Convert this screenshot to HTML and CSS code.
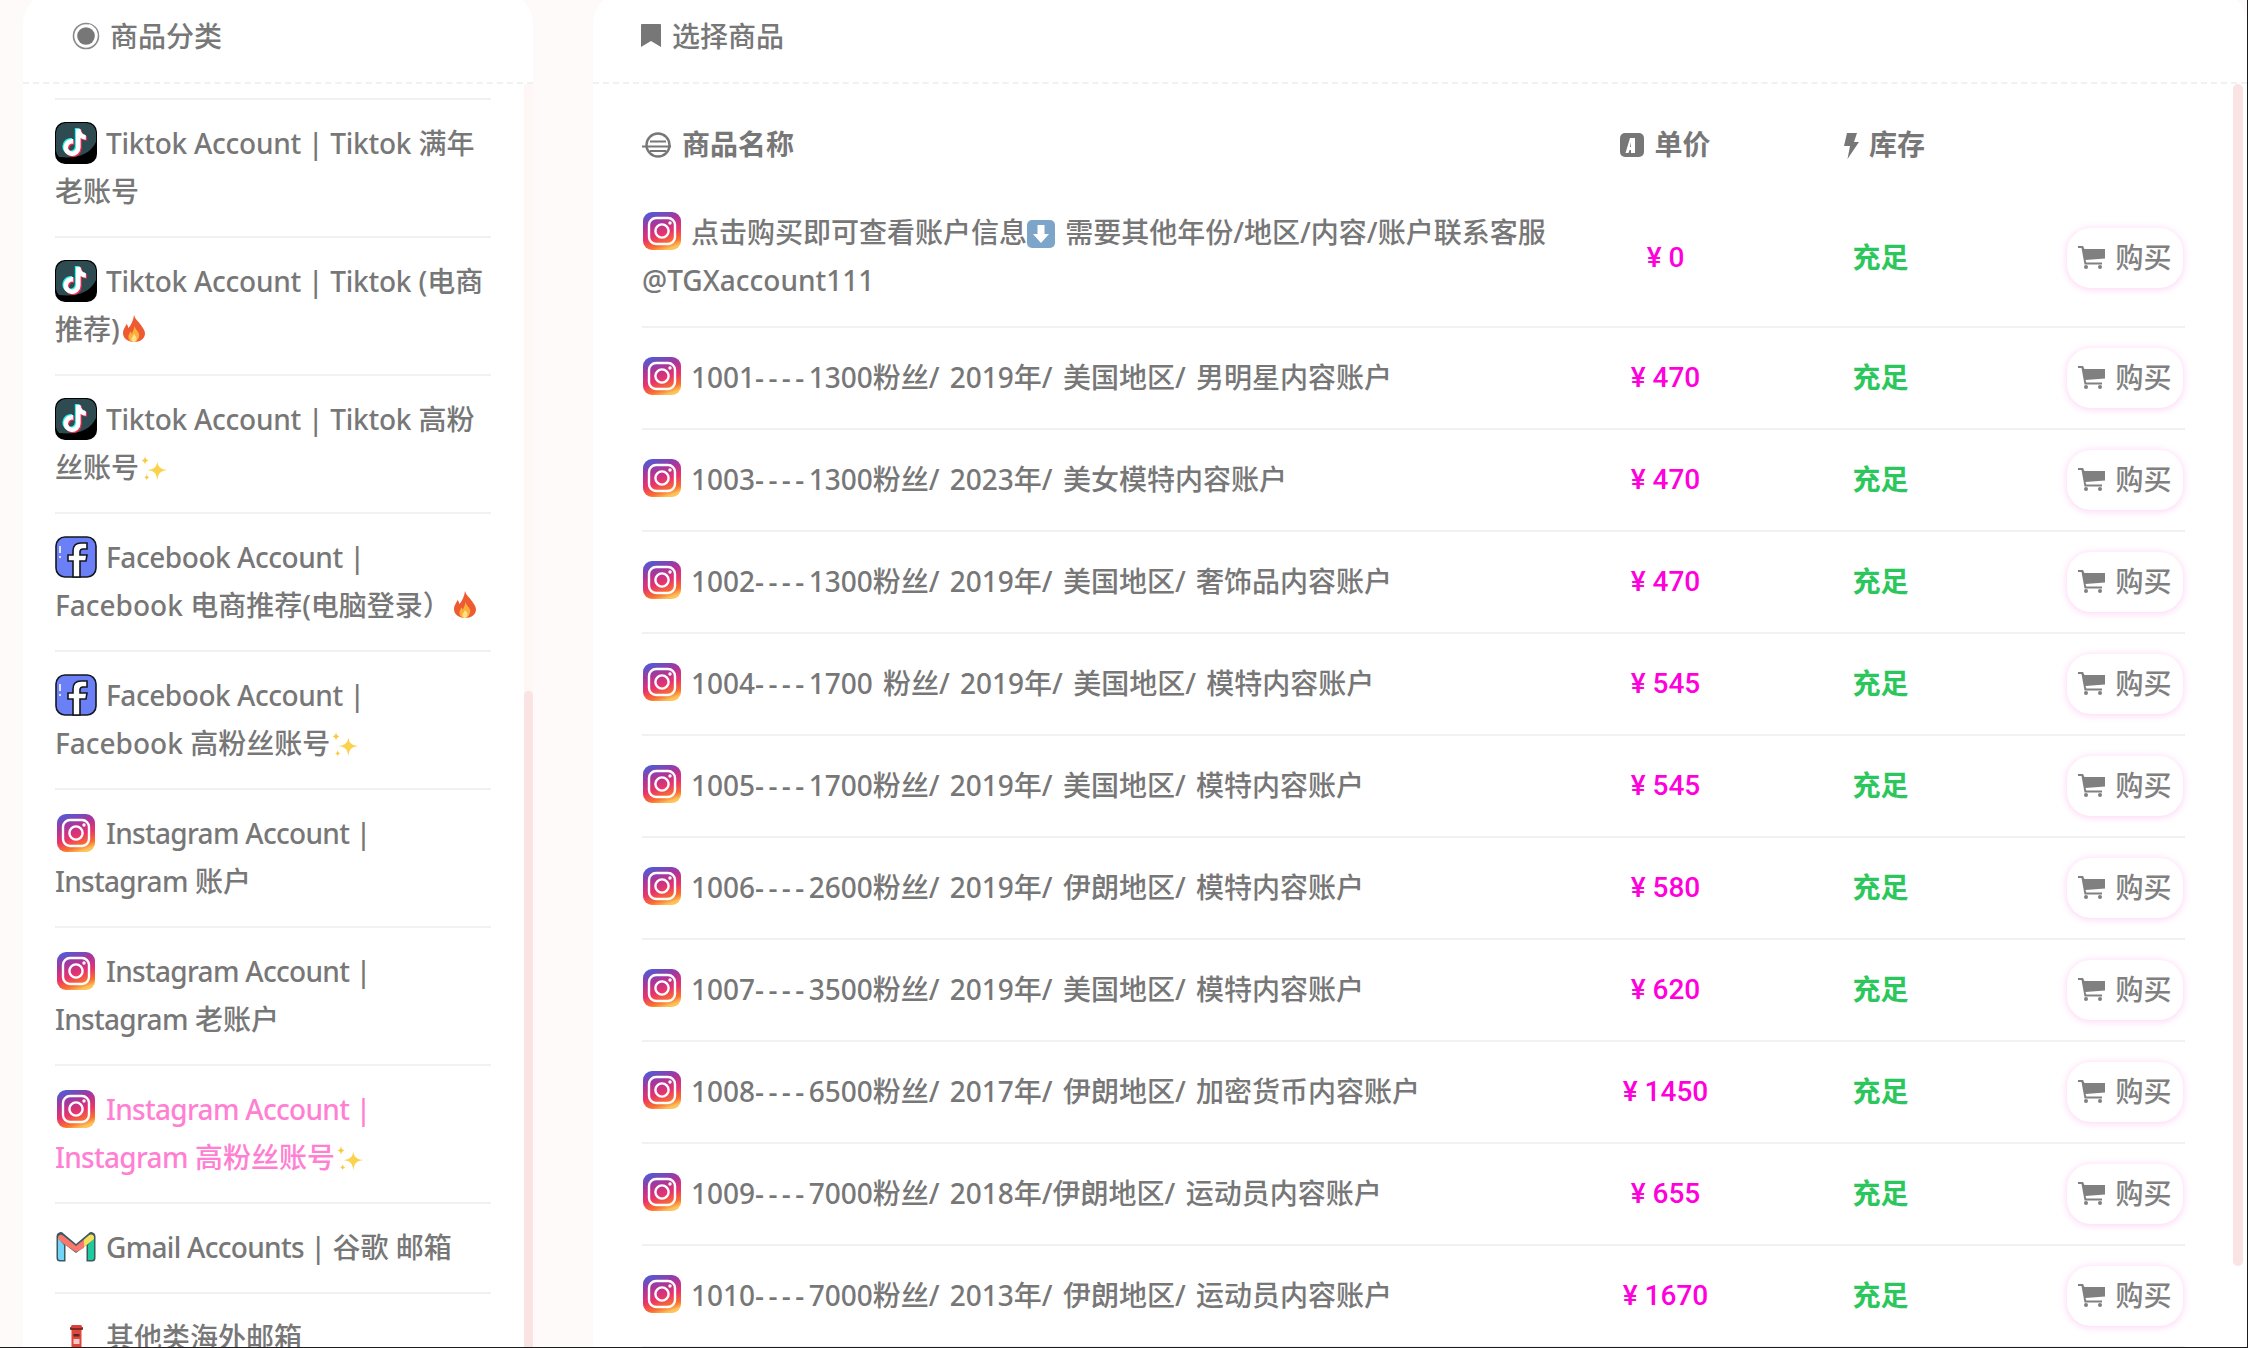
FILE: index.html
```html
<!DOCTYPE html>
<html lang="zh-CN">
<head>
<meta charset="utf-8">
<title>商品</title>
<link rel="stylesheet" href="styles.css">
</head>
<body>
<svg class="defs" aria-hidden="true">
  <defs>
    <linearGradient id="ig" x1="0.25" y1="0" x2="0.6" y2="1">
      <stop offset="0" stop-color="#4f5bd5"/>
      <stop offset="0.3" stop-color="#a9359c"/>
      <stop offset="0.6" stop-color="#e8336d"/>
      <stop offset="0.85" stop-color="#f9702f"/>
      <stop offset="1" stop-color="#fcc45a"/>
    </linearGradient>
    <symbol id="i-ig" viewBox="0 0 42 42">
      <rect x="2" y="2" width="38" height="38" rx="9" fill="url(#ig)"/>
      <rect x="8" y="8" width="26" height="26" rx="7" fill="none" stroke="#fff" stroke-width="2.4"/>
      <circle cx="21" cy="21" r="6.6" fill="none" stroke="#fff" stroke-width="2.4"/>
      <circle cx="29" cy="13" r="1.7" fill="#fff"/>
    </symbol>
    <symbol id="i-tt" viewBox="0 0 42 42">
      <rect width="42" height="42" rx="10" fill="#000"/>
      <path d="M11 1h20a10 10 0 0 1 10 9v10c-6 13-20 17-37 15a10 10 0 0 1-3-6V11A10 10 0 0 1 11 1z" fill="#2f4b52"/>
      <g transform="translate(4.2 4.2) scale(1.36)">
        <path d="M19.6 6.7a5 5 0 0 1-3.9-4.4V2h-3.4v13.7a2.9 2.9 0 0 1-5.2 1.7 2.9 2.9 0 0 1 3.2-4.5V9.4a6.3 6.3 0 1 0 5.4 6.3v-7a8.2 8.2 0 0 0 3.9 1.2z" fill="#25f4ee" transform="translate(-.8 -.7)"/>
        <path d="M19.6 6.7a5 5 0 0 1-3.9-4.4V2h-3.4v13.7a2.9 2.9 0 0 1-5.2 1.7 2.9 2.9 0 0 1 3.2-4.5V9.4a6.3 6.3 0 1 0 5.4 6.3v-7a8.2 8.2 0 0 0 3.9 1.2z" fill="#fe2c55" transform="translate(.8 .7)"/>
        <path d="M19.6 6.7a5 5 0 0 1-3.9-4.4V2h-3.4v13.7a2.9 2.9 0 0 1-5.2 1.7 2.9 2.9 0 0 1 3.2-4.5V9.4a6.3 6.3 0 1 0 5.4 6.3v-7a8.2 8.2 0 0 0 3.9 1.2z" fill="#fff"/>
      </g>
    </symbol>
    <symbol id="i-fb" viewBox="0 0 42 42">
      <rect x="1" y="1" width="40" height="40" rx="9" fill="#6b80f6" stroke="#14171f" stroke-width="1.6"/>
      <path d="M5 10v7M5 20v2" stroke="#fff" stroke-width="1.6" fill="none"/>
      <path d="M18 41V25h-5v-6h5v-4c0-6 4-8 8-8h6v6h-4c-2 0-3 .8-3 3v3h7l-1 6h-6v16z" fill="#fff" stroke="#14171f" stroke-width="1.6"/>
    </symbol>
    <symbol id="i-gm" viewBox="0 0 42 42">
      <path d="M1.500 10a4 4 0 0 1 7-2.500L21 18 33.500 7.500a4 4 0 0 1 7 2.500v22a3.500 3.500 0 0 1-3.500 3.500h-5.500V19L21 27 10.500 19v16.500H5A3.500 3.500 0 0 1 1.500 32z" fill="#3c5863"/>
      <path d="M3 12v20a2 2 0 0 0 2 2h4V19z" fill="#73d4f8"/>
      <path d="M39 12v20a2 2 0 0 1-2 2h-4V19z" fill="#1ecb9a"/>
      <path d="M3 12a3 3 0 0 1 5-2.500L21 20l8-6.500V22l-8 4L9 18 3 13z" fill="#f8786c"/>
      <path d="M29 13.500l5-4.200A3 3 0 0 1 39 12v1l-6 5-4 3z" fill="#f6e05a"/>
    </symbol>
    <symbol id="i-box" viewBox="0 0 42 42">
      <rect x="15" y="11" width="13" height="3" rx="1" fill="#7d2a24"/>
      <rect x="16" y="9" width="11" height="3" rx="1.500" fill="#d9423a"/>
      <rect x="16.500" y="14" width="10" height="24" fill="#e0473d"/>
      <rect x="18.500" y="18" width="6" height="2.500" fill="#5a2a26"/>
      <rect x="18.500" y="23" width="6" height="5" fill="#f3c9c5"/>
      <rect x="15" y="34" width="13" height="4" fill="#6d6d6d"/>
    </symbol>
    <symbol id="i-fire" viewBox="0 0 22 27">
      <path d="M11 0c1 4 4 6 6.500 9.500C20 13 22 15.500 22 18.500 22 23.500 17 27 11 27S0 23.500 0 18c0-4 2.500-6 3.500-9 1 1 1.500 2.500 2 4C8 10 10.500 5 11 0z" fill="#ee5b33"/>
      <path d="M11.500 11c.5 3 3 4.500 4.500 7.500 1 3-1.500 8.500-5 8.500-3.500 0-6-2.500-5.500-6 .3-2 1.500-3 2-4.500.8.500 1 1.500 1.200 2.500C10 16.500 11 14 11.500 11z" fill="#fbb03b"/>
      <path d="M11 19c1 1.500 2.500 2.500 2.500 4.500S12.500 27 11 27s-3-1.500-2.500-3.500c.3-1.500 2-2.500 2.500-4.500z" fill="#ffe28a"/>
    </symbol>
    <symbol id="i-spark" viewBox="0 0 25 24">
      <path d="M15.500 5c.8 4.700 2.800 6.700 9 7.500-6.200.8-8.200 2.800-9 9-.8-6.200-2.800-8.200-9-9 6.200-.8 8.200-2.800 9-7.500z" fill="#fbd24c"/>
      <path d="M4.500 0c.3 2.500 1 3.300 3 4-2 .7-2.700 1.500-3 4-.3-2.500-1-3.300-3-4 2-.7 2.700-1.500 3-4zM6 16c.2 1.800.8 2.500 2.500 3-1.700.5-2.300 1.200-2.500 3-.2-1.800-.8-2.500-2.500-3 1.700-.5 2.300-1.200 2.500-3z" fill="#f9c93e"/>
    </symbol>
    <symbol id="i-down" viewBox="0 0 28 28">
      <rect width="28" height="28" rx="5" fill="#7da5ca"/>
      <path d="M10.500 5h7v9H22l-8 9-8-9h4.500z" fill="#fff"/>
    </symbol>
    <symbol id="i-target" viewBox="0 0 28 28">
      <circle cx="14" cy="14" r="12.500" fill="none" stroke="#8a8a8a" stroke-width="1.600"/>
      <circle cx="14" cy="14" r="8.800" fill="#777"/>
      <path d="M17 2.500c5 2 8 6 8 11" fill="none" stroke="#fff" stroke-width="1.200"/>
    </symbol>
    <symbol id="i-mark" viewBox="0 0 20 24">
      <path d="M1 0h18a1 1 0 0 1 1 1v22l-10-6-10 6V1a1 1 0 0 1 1-1z" fill="#777"/>
    </symbol>
    <symbol id="i-name" viewBox="0 0 30 28">
      <circle cx="16" cy="14" r="11.500" fill="none" stroke="#777" stroke-width="2.400"/>
      <path d="M0 15.500h29M8 10.500h16M8 20h16" stroke="#777" stroke-width="2.200" fill="none"/>
    </symbol>
    <symbol id="i-a" viewBox="0 0 24 24">
      <rect width="24" height="24" rx="5" fill="#777"/>
      <path d="M5.500 20L10 5h5v15h-4v-3H9.500L8.500 20zM11 14V9l-1 5z" fill="#fff" fill-rule="evenodd"/>
    </symbol>
    <symbol id="i-bolt" viewBox="0 0 15 26">
      <path d="M3 0h10l-3 9h5L3.500 26 6 13H0z" fill="#777"/>
    </symbol>
    <symbol id="i-cart" viewBox="0 0 27 24">
      <path d="M0 1h5l1.500 3H27v9.500L7.500 15l.8 2.500H24v2H6.500L3.500 3H0z" fill="#808080"/>
      <circle cx="8" cy="22" r="2" fill="#808080"/>
      <circle cx="22" cy="22" r="2" fill="#808080"/>
    </symbol>
  </defs>
</svg>

<div class="page">
  <aside class="card side">
    <h2 class="card-title side-title"><svg class="ttl-target"><use href="#i-target"/></svg>商品分类</h2>
    <div class="card-body">
      <ul class="cats">
        <li class="cat"><svg class="ico"><use href="#i-tt"/></svg><span class="en-t">Tiktok Account | Tiktok</span> 满年<br>老账号</li>
        <li class="cat"><svg class="ico"><use href="#i-tt"/></svg><span class="en-t">Tiktok Account | Tiktok</span> (电商<br>推荐)<svg class="fire"><use href="#i-fire"/></svg></li>
        <li class="cat"><svg class="ico"><use href="#i-tt"/></svg><span class="en-t">Tiktok Account | Tiktok</span> 高粉<br>丝账号<svg class="spark"><use href="#i-spark"/></svg></li>
        <li class="cat"><svg class="ico"><use href="#i-fb"/></svg><span class="en">Facebook Account |</span><br>Facebook 电商推荐(电脑登录）<svg class="fire"><use href="#i-fire"/></svg></li>
        <li class="cat"><svg class="ico"><use href="#i-fb"/></svg><span class="en">Facebook Account |</span><br>Facebook 高粉丝账号<svg class="spark"><use href="#i-spark"/></svg></li>
        <li class="cat"><svg class="ico"><use href="#i-ig"/></svg><span class="en-i">Instagram Account |</span><br><span class="en-i">Instagram</span> 账户</li>
        <li class="cat"><svg class="ico"><use href="#i-ig"/></svg><span class="en-i">Instagram Account |</span><br><span class="en-i">Instagram</span> 老账户</li>
        <li class="cat active"><svg class="ico"><use href="#i-ig"/></svg><span class="en-i">Instagram Account |</span><br><span class="en-i">Instagram</span> 高粉丝账号<svg class="spark"><use href="#i-spark"/></svg></li>
        <li class="cat"><svg class="ico"><use href="#i-gm"/></svg><span class="en-i">Gmail Accounts |</span> 谷歌 邮箱</li>
        <li class="cat"><svg class="ico"><use href="#i-box"/></svg>其他类海外邮箱</li>
      </ul>
      <div class="side-track"><div class="side-thumb"></div></div>
    </div>
  </aside>

  <main class="card goods">
    <h2 class="card-title goods-title"><svg class="ttl-mark"><use href="#i-mark"/></svg>选择商品</h2>
    <div class="card-body">
      <div class="table-wrap">
        <table class="goods-table">
          <colgroup><col class="c-name"><col class="c-price"><col class="c-stock"><col class="c-buy"></colgroup>
          <thead>
            <tr>
              <th class="th-name"><svg class="th-i-name"><use href="#i-name"/></svg>商品名称</th>
              <th><svg class="th-i-a"><use href="#i-a"/></svg>单价</th>
              <th class="th-stock"><svg class="th-i-bolt"><use href="#i-bolt"/></svg>库存</th>
              <th></th>
            </tr>
          </thead>
          <tbody>
            <tr>
              <td class="name"><svg class="ico"><use href="#i-ig"/></svg>点击购买即可查看账户信息<svg class="down"><use href="#i-down"/></svg> 需要其他年份/地区/内容/账户联系客服<br>@TGXaccount111</td>
              <td class="price">¥ 0</td><td class="stock">充足</td>
              <td class="act"><button class="buy" type="button"><svg class="cart"><use href="#i-cart"/></svg>购买</button></td>
            </tr>
            <tr>
              <td class="name"><svg class="ico"><use href="#i-ig"/></svg>1001<span class="dash">----</span>1300粉丝/ 2019年/ 美国地区/ 男明星内容账户</td>
              <td class="price">¥ 470</td><td class="stock">充足</td>
              <td class="act"><button class="buy" type="button"><svg class="cart"><use href="#i-cart"/></svg>购买</button></td>
            </tr>
            <tr>
              <td class="name"><svg class="ico"><use href="#i-ig"/></svg>1003<span class="dash">----</span>1300粉丝/ 2023年/ 美女模特内容账户</td>
              <td class="price">¥ 470</td><td class="stock">充足</td>
              <td class="act"><button class="buy" type="button"><svg class="cart"><use href="#i-cart"/></svg>购买</button></td>
            </tr>
            <tr>
              <td class="name"><svg class="ico"><use href="#i-ig"/></svg>1002<span class="dash">----</span>1300粉丝/ 2019年/ 美国地区/ 奢饰品内容账户</td>
              <td class="price">¥ 470</td><td class="stock">充足</td>
              <td class="act"><button class="buy" type="button"><svg class="cart"><use href="#i-cart"/></svg>购买</button></td>
            </tr>
            <tr>
              <td class="name"><svg class="ico"><use href="#i-ig"/></svg>1004<span class="dash">----</span>1700 粉丝/ 2019年/ 美国地区/ 模特内容账户</td>
              <td class="price">¥ 545</td><td class="stock">充足</td>
              <td class="act"><button class="buy" type="button"><svg class="cart"><use href="#i-cart"/></svg>购买</button></td>
            </tr>
            <tr>
              <td class="name"><svg class="ico"><use href="#i-ig"/></svg>1005<span class="dash">----</span>1700粉丝/ 2019年/ 美国地区/ 模特内容账户</td>
              <td class="price">¥ 545</td><td class="stock">充足</td>
              <td class="act"><button class="buy" type="button"><svg class="cart"><use href="#i-cart"/></svg>购买</button></td>
            </tr>
            <tr>
              <td class="name"><svg class="ico"><use href="#i-ig"/></svg>1006<span class="dash">----</span>2600粉丝/ 2019年/ 伊朗地区/ 模特内容账户</td>
              <td class="price">¥ 580</td><td class="stock">充足</td>
              <td class="act"><button class="buy" type="button"><svg class="cart"><use href="#i-cart"/></svg>购买</button></td>
            </tr>
            <tr>
              <td class="name"><svg class="ico"><use href="#i-ig"/></svg>1007<span class="dash">----</span>3500粉丝/ 2019年/ 美国地区/ 模特内容账户</td>
              <td class="price">¥ 620</td><td class="stock">充足</td>
              <td class="act"><button class="buy" type="button"><svg class="cart"><use href="#i-cart"/></svg>购买</button></td>
            </tr>
            <tr>
              <td class="name"><svg class="ico"><use href="#i-ig"/></svg>1008<span class="dash">----</span>6500粉丝/ 2017年/ 伊朗地区/ 加密货币内容账户</td>
              <td class="price">¥ 1450</td><td class="stock">充足</td>
              <td class="act"><button class="buy" type="button"><svg class="cart"><use href="#i-cart"/></svg>购买</button></td>
            </tr>
            <tr>
              <td class="name"><svg class="ico"><use href="#i-ig"/></svg>1009<span class="dash">----</span>7000粉丝/ 2018年/伊朗地区/ 运动员内容账户</td>
              <td class="price">¥ 655</td><td class="stock">充足</td>
              <td class="act"><button class="buy" type="button"><svg class="cart"><use href="#i-cart"/></svg>购买</button></td>
            </tr>
            <tr>
              <td class="name"><svg class="ico"><use href="#i-ig"/></svg>1010<span class="dash">----</span>7000粉丝/ 2013年/ 伊朗地区/ 运动员内容账户</td>
              <td class="price">¥ 1670</td><td class="stock">充足</td>
              <td class="act"><button class="buy" type="button"><svg class="cart"><use href="#i-cart"/></svg>购买</button></td>
            </tr>
          </tbody>
        </table>
      </div>
      <div class="main-track"><div class="main-thumb"></div></div>
    </div>
  </main>
</div>
</body>
</html>
```
FILE: styles.css
```css
* { box-sizing: border-box; }
html, body { margin: 0; padding: 0; height: 100%; overflow: hidden; background: #fff; }
body {
  font-family: "Noto Sans", "Noto Sans CJK SC", sans-serif;
  font-size: 28px;
  line-height: 48px;
  color: #777;
}
.defs { display: block; width: 0; height: 0; overflow: hidden; }
svg { display: inline-block; }

.page {
  display: flex;
  height: 1348px;
  padding-left: 23px;
  gap: 60px;
  background: #fffafa;
  border-right: 1px solid #1c1c1c;
  border-bottom: 1px solid #1c1c1c;
  overflow: hidden;
}
.card {
  display: flex;
  flex-direction: column;
  margin-top: -8px;
  background: #fff;
  border-radius: 32px 32px 0 0;
}
.side { width: 510px; flex: none; }
.goods { flex: 1; min-width: 0; }

.card-title {
  display: flex;
  align-items: center;
  flex: none;
  height: 92px;
  padding-bottom: 2px;
  margin: 0;
  border-bottom: 2px dashed #f1f1f1;
  font-size: 28px;
  font-weight: 500;
  color: #777;
}
.side-title { padding-left: 49px; }
.goods-title { padding-left: 48px; }
.ttl-target { width: 28px; height: 28px; margin-right: 10px; }
.ttl-mark { width: 20px; height: 24px; margin-right: 11px; }

.card-body { display: flex; flex: 1; min-height: 0; overflow: hidden; }

.cats {
  flex: 1;
  list-style: none;
  margin: 0;
  padding: 14px 33px 0 32px;
}
.cat {
  padding: 19px 0 21px;
  border-top: 2px solid #f1f1f1;
  font-weight: 500;
}
.cat.active { color: #ff80d2; }
.en { letter-spacing: -0.45px; }
.en-t { letter-spacing: -0.25px; }
.en-i { letter-spacing: -0.7px; }
.ico { width: 42px; height: 42px; margin-right: 9px; vertical-align: -10px; }
.fire { width: 22px; height: 27px; margin-left: 3px; vertical-align: -2px; }
.spark { width: 28px; height: 27px; margin-left: 1px; vertical-align: -5px; }
.down { width: 28px; height: 28px; vertical-align: -5px; }

.side-track {
  flex: none;
  width: 9px;
  padding-top: 607px;
  background: #fff6f6;
}
.side-thumb { height: 100%; background: #f9e3e3; border-radius: 5px 5px 0 0; }

.table-wrap { flex: 1; min-width: 0; padding: 17px 48px 0 49px; }
.goods-table { width: 100%; table-layout: fixed; border-collapse: separate; border-spacing: 0; }
.c-price, .c-stock { width: 215px; }
.c-buy { width: 197px; }
th {
  padding: 19px 0 21px;
  font-weight: 700;
  font-size: 28px;
  color: #777;
  text-align: center;
}
th.th-name { text-align: left; }
th.th-stock { padding-left: 8px; }
.th-i-name { width: 30px; height: 28px; margin-right: 10px; vertical-align: -4px; }
.th-i-a { width: 24px; height: 24px; margin-right: 10px; vertical-align: -2px; }
.th-i-bolt { width: 15px; height: 26px; margin-right: 10px; vertical-align: -4px; }
td {
  padding: 20px 0;
  border-bottom: 2px solid #f1f1f3;
  vertical-align: middle;
  text-align: center;
}
td.name {
  padding: 19px 0 22px;
  text-align: left;
  font-weight: 500;
  word-spacing: 3px;
}
td.name .ico { margin-right: 8px; margin-left: -1px; vertical-align: -9px; }
.dash { letter-spacing: 4.4px; }
.price { color: #ff00dc; font-weight: 500; font-family: Roboto, "Noto Sans CJK SC", sans-serif; }
td.stock { padding: 19px 0 21px; color: #2cc75c; font-weight: 700; }
.act { text-align: right; padding-right: 2px; }
.buy {
  display: inline-flex;
  align-items: center;
  justify-content: center;
  gap: 10px;
  width: 116px;
  height: 60px;
  padding: 0 0 2px;
  border: 0;
  border-radius: 24px;
  background: #fff;
  box-shadow: 0 1px 7px 1px #ffd8f6;
  font: inherit;
  font-weight: 500;
  color: #808080;
  vertical-align: middle;
}
.cart { width: 27px; height: 24px; }

.main-track { flex: none; width: 14px; padding-right: 4px; }
.main-thumb { height: 1182px; background: #f9e3e3; border-radius: 5px; }
```
